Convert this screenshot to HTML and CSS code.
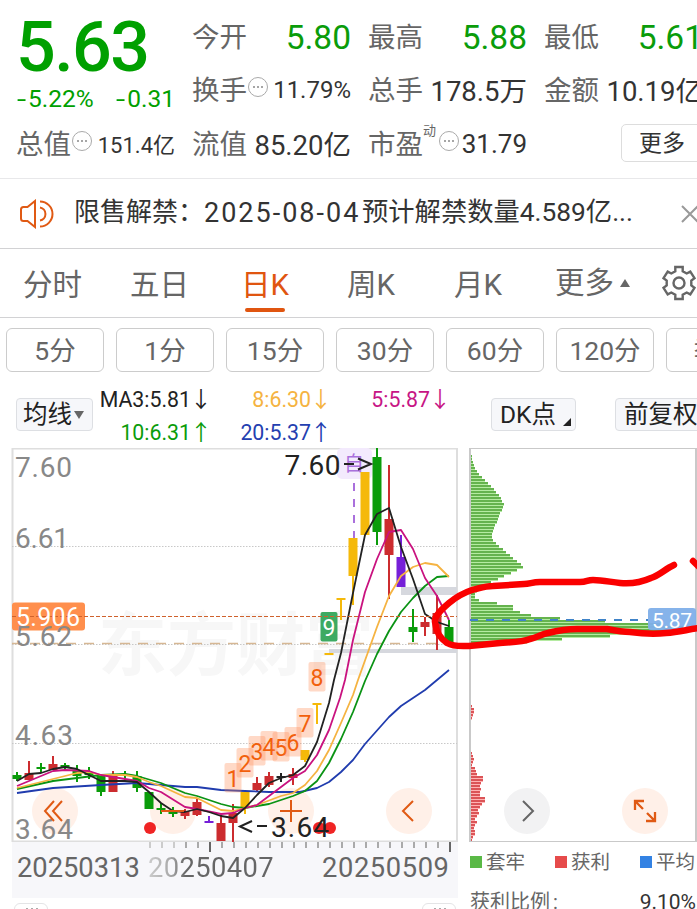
FILE: index.html
```html
<!DOCTYPE html>
<html lang="zh-CN">
<head>
  <meta charset="UTF-8">
  <meta name="viewport" content="width=device-width, initial-scale=1.0">
  <title>日K</title>
  <link rel="stylesheet" href="styles.css">
</head>
<body>
  <header class="quote">
    <div class="price">
      <div class="price-now">5.63</div>
      <div class="price-change"><span><i class="minus">-</i>5.22%</span><span><i class="minus">-</i>0.31</span></div>
    </div>
    <div class="stat"><span class="label">今开</span><span class="value open">5.80</span></div>
    <div class="stat"><span class="label">最高</span><span class="value open">5.88</span></div>
    <div class="stat"><span class="label">最低</span><span class="value open">5.61</span></div>
    <div class="stat"><span class="label">换手<i class="dots"></i></span><span class="value small">11.79%</span></div>
    <div class="stat"><span class="label">总手</span><span class="value">178.5万</span></div>
    <div class="stat"><span class="label">金额</span><span class="value">10.19亿</span></div>
    <div class="stat"><span class="label">总值<i class="dots"></i></span><span class="value tiny">151.4亿</span></div>
    <div class="stat"><span class="label">流值</span><span class="value">85.20亿</span></div>
    <div class="stat"><span class="label">市盈<sup>动</sup><i class="dots"></i></span><span class="value mid">31.79</span></div>
    <button class="more">更多</button>
  </header>

  <section class="notice">
    <svg class="speaker" width="36" height="30" viewBox="0 0 36 30">
      <path d="M16 2v26L8.500 22H4.500Q2 22 2 19.500V10.500Q2 8 4.500 8H8.500ZM21 8.500a6.600 6.600 0 0 1 0 13M21 2.500a12.500 12.500 0 0 1 0 25"/>
    </svg>
    <span class="notice-title">限售解禁：</span>
    <span class="notice-date">2025-08-04</span><span class="notice-text">预计解禁数量4.589亿...</span>
    <svg class="close" width="20" height="20" viewBox="0 0 20 20"><path d="M2 2L18 18M18 2L2 18"/></svg>
  </section>

  <nav class="tabs">
    <a>分时</a>
    <a>五日</a>
    <a class="active">日K</a>
    <a>周K</a>
    <a>月K</a>
    <a class="tab-more">更多<i class="up"></i></a>
    <svg class="gear" width="36" height="36" viewBox="0 0 36 36">
      <path d="M14.300 2h7.400v4.200l4 2.300 3.600-1.900 4.200 6.600-3.200 2.400v4.800l3.200 2.400-4.200 6.600-3.600-1.900-4 2.300V34h-7.400v-4.200l-4-2.300-3.600 1.900-4.200-6.600 3.200-2.400v-4.800l-3.200-2.400 4.200-6.600 3.600 1.900 4-2.300z"/>
      <circle cx="18" cy="18" r="5.500"/>
    </svg>
  </nav>

  <div class="periods">
    <button>5分</button>
    <button>1分</button>
    <button>15分</button>
    <button>30分</button>
    <button>60分</button>
    <button>120分</button>
    <button>季K</button>
  </div>

  <div class="indicators">
    <button class="chip chip-ma">均线<i class="down"></i></button>
    <div class="ma">
      <span class="ma3">MA3:5.81<b>↓</b></span>
      <span class="ma8">8:6.30<b>↓</b></span>
      <span class="ma5">5:5.87<b>↓</b></span>
      <span class="ma10">10:6.31<b>↑</b></span>
      <span class="ma20">20:5.37<b>↑</b></span>
    </div>
    <button class="chip chip-dk">DK点<i class="corner"></i></button>
    <button class="chip chip-fq">前复权</button>
  </div>

  <main class="charts">
    <div class="kline">
      <svg class="plot" width="458" height="394" viewBox="0 448 458 394">
        <text class="watermark" x="98" y="670" textLength="276">东方财富</text>
        <path class="frame" d="M12.500 842V448M457 448V842M12 448.500H458M12 841.500H458"/>
        <path class="grid" d="M12 546.500H457M12 644.500H457M12 743.500H457"/>
        <path class="cost" d="M12 643.500H457"/>
        <rect class="zone" x="401" y="587" width="56" height="8"/>
        <rect class="zone" x="329" y="649" width="128" height="4"/>
        <g class="touch">
          <circle cx="55" cy="811" r="23"/>
          <circle cx="173" cy="811" r="23"/>
          <circle cx="291" cy="811" r="23"/>
          <circle cx="409" cy="811" r="23"/>
        </g>
        <rect class="self-box" x="337" y="448" width="35" height="31" rx="5"/>
        <text class="self" x="344" y="471">自</text>
        <path class="self-line" d="M354 483V538"/>
        <g id="candles"></g>
        <g class="lines">
          <polyline class="l20" points="17,793 53,788 101,785 137,783 161,785 185,787 197,787 221,790 245,791 269,792 300,792 317,788 329,782 341,772 353,760 365,744 389,717 401,706 425,690 449,670"/>
          <polyline class="l10" points="17,789 53,781 101,775 125,774 137,776 161,783 185,793 197,796 221,804 233,807 245,808 257,806 269,804 293,796 305,791 317,781 329,763 341,739 353,712 365,681 377,654 389,631 401,612 413,598 425,586 437,577 449,576"/>
          <polyline class="l8" points="17,788 53,779 77,773 89,772 101,775 125,775 137,777 149,782 161,786 185,797 197,798 221,810 233,811 245,808 257,805 281,796 293,793 305,785 317,771 329,750 341,723 353,695 358,680 377,627 389,596 401,576 413,567 425,563 437,565 449,577"/>
          <polyline class="l5" points="17,786 53,771 65,770 89,771 101,775 137,781 149,788 161,792 185,807 197,809 221,814 233,813 245,808 257,805 269,796 281,787 293,778 305,771 317,755 329,730 340,698 345,680 353,640 365,592 377,559 389,532 401,530 413,549 425,578 437,596 449,620"/>
          <polyline class="l3" points="17,781 29,774 41,773 53,769 65,767 77,769 89,775 101,781 113,781 125,781 137,782 149,792 161,803 173,811 185,812 197,809 209,812 221,816 233,818 245,808 257,795 269,783 281,778 293,775 305,766 317,742 329,703 334,680 341,653 353,593 365,535 377,514 389,508 401,547 413,579 425,614 437,622 449,626"/>
        </g>
        <g id="counts"></g>
        <rect class="last-box" x="12" y="602.500" width="73" height="28" rx="3"/>
        <path class="last-line" d="M12 616.500H457"/>
        <g class="axis">
          <text x="15" y="476.500" textLength="57">7.60</text>
          <text x="15" y="547.500" textLength="54">6.61</text>
          <text x="15" y="646" textLength="57">5.62</text>
          <text x="15" y="744.500" textLength="58">4.63</text>
          <text x="15" y="838.500" textLength="58">3.64</text>
        </g>
        <text class="last" x="16" y="626" textLength="64">5.906</text>
        <g class="marks">
          <text x="284.500" y="474.500" textLength="56">7.60</text>
          <path d="M344 464H354M358 458.500L371 464L358 469.500"/>
          <circle cx="150" cy="828" r="6"/>
          <circle cx="319" cy="828" r="6"/>
          <circle cx="330" cy="828" r="6"/>
          <text x="271" y="836.500" textLength="58">3.64</text>
          <path d="M252 821L240 826.500L252 832M257 826H267"/>
        </g>
        <path class="touch-icon" d="M54 801L45 811L54 821M62 801L53 811L62 821M161 811H184M280 811H302M291 800V822M413 801L403 811L413 821"/>
      </svg>
      <div class="dates">
        <svg class="ticks" width="446" height="12" viewBox="12 842 446 12"><g id="ticks"></g></svg>
        <span>20250313</span>
        <span class="fade">20250407</span>
        <span>20250509</span>
      </div>
      <div class="slider"><i></i><i></i></div>
    </div>

    <div class="chips">
      <svg class="plot" width="239" height="394" viewBox="458 448 239 394">
        <g id="profile"></g>
        <path class="chip-frame" d="M470 448V842M696 448V842"/>
        <path class="chip-edge" d="M469 448.500H697M469 841.500H697"/>
        <path class="avg-line" d="M470 620H648"/>
        <rect class="avg-box" x="648" y="608" width="48" height="22" rx="3"/>
        <text class="avg" x="652" y="628" textLength="40">5.87</text>
        <circle class="gray-touch" cx="527" cy="811" r="23"/>
        <circle class="orange-touch" cx="645" cy="811" r="23"/>
        <path class="next" d="M523 801L533 811L523 821"/>
        <path class="expand" d="M635 810V801H644M635.500 801.500L643 809M655 812V821H646M654.500 820.500L647 813"/>
      </svg>
      <div class="legend">
        <span><i class="green"></i>套牢</span>
        <span><i class="red"></i>获利</span>
        <span><i class="blue"></i>平均</span>
      </div>
      <div class="ratio"><span>获利比例<i>:</i></span><b>9.10%</b></div>
    </div>

    <svg class="pen" width="697" height="110" viewBox="0 550 697 110">
      <path d="M674 565C665 569 660 575 651 578C642 582 630 584 620 583C610 582 603 580 593 580C587 580 587 582 580 582H540C532 582 530 584 524 584L493 586C484 586 478 589 472 590C463 593 455 598 449 603C442 609 434 616 435 622C436 632 441 639 447 643C454 647 461 646 469 646L500 643C515 642 523 642 530 639C538 637 542 634 548 633C560 630 568 629 577 629H607C617 631 622 632 630 632C645 634 657 634 666 633C680 632 689 629 700 628M693 561L700 568"/>
    </svg>
  </main>

  <script>
    const colors = { r: "#cc2c2f", g: "#0a9c0a", y: "#f5b90a", p: "#7620d8", k: "#222" };

    // [x, high, top, bottom, low, color]
    const candles = [
      [17, 772, 775, 779, 781, "g"], [29, 761, 773, 780, 780, "r"], [41, 763, 767, 769, 772, "g"],
      [53, 756, 764, 770, 770, "r"], [65, 763, 765, 767, 770, "g"], [77, 765, 770, 776, 782, "g"],
      [89, 767, 773, 775, 779, "g"], [101, 775, 776, 792, 796, "g"], [113, 771, 776, 792, 792, "r"],
      [125, 771, 774, 776, 780, "g"], [137, 771, 776, 788, 792, "g"], [149, 792, 792, 809, 809, "g"],
      [161, 803, 808, 810, 814, "g"], [173, 807, 811, 814, 817, "g"], [185, 809, 811, 816, 819, "r"],
      [197, 799, 802, 815, 816, "r"], [209, 816, 821, 823, 823, "p"], [221, 815, 823, 841, 841, "r"],
      [233, 804, 813, 823, 842, "r"], [245, 792, 792, 807, 814, "y"], [257, 777, 783, 790, 791, "r"],
      [269, 772, 776, 785, 787, "r"], [281, 773, 776, 778, 782, "k"], [293, 768, 774, 778, 785, "r"],
      [305, 750, 750, 760, 762, "y"], [317, 703, 703, 705, 724, "y"], [329, 653, 653, 655, 655, "y"],
      [341, 598, 598, 600, 620, "y"], [353, 538, 538, 576, 605, "y"], [365, 472, 472, 535, 535, "y"],
      [377, 448, 457, 532, 545, "g"], [389, 465, 519, 555, 599, "r"], [401, 535, 557, 587, 587, "p"],
      [413, 609, 627, 632, 642, "g"], [425, 617, 622, 627, 636, "r"], [437, 595, 613, 634, 650, "r"],
      [449, 620, 627, 642, 645, "g"]
    ];
    document.getElementById("candles").innerHTML = candles.map(([x, high, top, bottom, low, c]) =>
      `<rect x="${x - 1}" y="${high}" width="2" height="${low - high}" fill="${colors[c]}"/>` +
      `<rect x="${x - 4.5}" y="${top}" width="9" height="${bottom - top}" fill="${colors[c]}"/>`
    ).join("");

    // 九转 1-9
    const counts = [[233, 763], [245, 748], [257, 736], [269, 731], [281, 732], [293, 727], [305, 708], [317, 662], [329, 612]];
    document.getElementById("counts").innerHTML = counts.map(([x, y], i) =>
      `<g class="${i === 8 ? "nine" : "count"}"><rect x="${x - 8.5}" y="${y}" width="17" height="29.5" rx="2"/>` +
      `<text x="${x}" y="${y + 23.5}">${i + 1}</text></g>`
    ).join("");

    let ticks = "";
    for (let x = 150; x <= 450; x += 12) {
      const major = x === 210 || x === 450;
      ticks += `<rect x="${x - 1}" y="842" width="2" height="${major ? 10 : 6}" fill="${major ? "#666" : x < 180 ? "#ccc" : "#aaa"}"/>`;
    }
    document.getElementById("ticks").innerHTML = ticks;

    // 筹码分布, 每 3px 一条
    const locked = [1, 1, 2, 2, 3, 4, 5, 7, 9, 12, 15, 18, 21, 24, 26, 29, 31, 32, 34, 33, 32, 30, 29, 28, 27, 25, 24, 23, 22, 22,
      23, 26, 29, 33, 36, 40, 43, 47, 51, 53, 47, 41, 34, 28, 21, 15, 10, 7, 5, 5, 9, 27, 43, 43, 50, 61, 90, 135, 190, 226, 226, 180, 140, 92, 57];
    const profit = [
      [655, [1]],
      [706, [2, 4, 4, 3, 2, 1]],
      [750, [1, 2, 3, 4, 3, 2, 5, 6, 7, 13, 13, 11, 10, 11, 10, 10, 15, 15, 12, 10, 8, 9, 7, 5, 7, 5, 4, 5, 5, 3, 2]]
    ];
    const bars = (start, list, dark, light) => list.map((w, i) =>
      `<rect x="470" y="${start + i * 3 - 1}" width="${w}" height="3" fill="${light}"/>` +
      `<rect x="470" y="${start + i * 3 - 1}" width="${w}" height="2" fill="${dark}"/>`
    ).join("");
    document.getElementById("profile").innerHTML =
      bars(450, locked, "#65b34e", "#b5eba2") +
      profit.map(([y, list]) => bars(y, list, "#db5457", "#ffb3b3")).join("");
  </script>
</body>
</html>
```
FILE: styles.css
```css
* {
  box-sizing: border-box;
}
html {
  overflow: hidden;
}
body {
  width: 697px;
  height: 909px;
  margin: 0;
  overflow: hidden;
  background: #fff;
  color: #333;
  font-family: Roboto, "Noto Sans CJK SC", sans-serif;
}
button {
  margin: 0;
  padding: 0;
  font-family: inherit;
  white-space: nowrap;
}
svg {
  display: block;
  flex: none;
}
i, b {
  font-style: normal;
  font-weight: 400;
}

/* quote */
.quote {
  display: grid;
  grid-template-columns: repeat(4, 159px);
  grid-template-rows: repeat(3, 53.5px);
  column-gap: 17px;
  height: 179px;
  padding: 9px 0 0 16px;
  border-bottom: 1px solid #e8e8ea;
}
.price {
  grid-row: span 2;
  color: #00a000;
}
.price-now {
  height: 73px;
  padding-top: 2px;
  font-size: 70px;
  font-weight: 500;
  line-height: 72px;
  letter-spacing: -1.6px;
}
.price-change {
  display: flex;
  justify-content: space-between;
  padding-left: 1px;
  line-height: 34px;
  font-size: 24.5px;
}
.minus {
  display: inline-block;
  width: 11px;
  transform: scaleX(1.35);
  transform-origin: 0 50%;
}
.stat {
  display: flex;
  align-items: center;
  justify-content: space-between;
  white-space: nowrap;
}
.label {
  display: flex;
  align-items: center;
  margin-top: -2px;
  color: #666;
  font-size: 27.5px;
}
.label sup {
  align-self: flex-start;
  margin-top: 1px;
  font-size: 13px;
  line-height: 16px;
}
.value {
  font-size: 27.5px;
}
.open {
  padding-top: 3px;
  color: #0a9c0a;
  font-size: 33.500px;
}
.small {
  padding-top: 1px;
  font-size: 24px;
}
.tiny {
  font-size: 22px;
}
.mid {
  padding-top: 3px;
  font-size: 26px;
}
.dots {
  display: grid;
  place-items: center;
  width: 20px;
  height: 20px;
  margin-left: 1px;
  margin-top: -2px;
  border: 1.5px solid #aaa;
  border-radius: 50%;
}
.label sup + .dots {
  margin-left: 3px;
}
.dots::before {
  content: "";
  width: 2px;
  height: 2px;
  border-radius: 1px;
  background: #888;
  box-shadow: -4px 0 #888, 4px 0 #888;
}
.more {
  width: 100px;
  height: 38px;
  margin: 8px 0 0 77px;
  padding-right: 18px;
  border: 1px solid #ddd;
  border-radius: 5px;
  background: #fff;
  color: #333;
  font-size: 23px;
  line-height: 33px;
}

/* notice */
.notice {
  display: flex;
  align-items: center;
  height: 70px;
  padding-left: 19px;
  border-bottom: 1px solid #d2d2d4;
  font-size: 26px;
  line-height: 66px;
  white-space: nowrap;
}
.notice span {
  flex: none;
  height: 70px;
}
.speaker {
  margin-right: 19px;
  fill: none;
  stroke: #e05a14;
  stroke-width: 2;
}
.notice-title {
  width: 130px;
}
.notice-date {
  width: 158px;
  padding-top: 1px;
  font-size: 27px;
  letter-spacing: 2px;
}
.notice-text {
  width: 318px;
  font-size: 26.3px;
}
.close {
  fill: none;
  stroke: #999;
  stroke-width: 2;
}

/* tabs */
.tabs {
  display: flex;
  align-items: center;
  height: 69px;
  padding-left: 23px;
  border-bottom: 1px solid #d2d2d4;
  color: #666;
  font-size: 29.5px;
  line-height: 73px;
}
.tabs a {
  display: flex;
  flex: none;
  flex-direction: column;
  width: 108px;
  height: 69px;
}
.tabs a:first-child {
  width: 107px;
}
.tabs a:nth-child(3) {
  width: 112px;
  padding-left: 3px;
}
.tabs .active {
  color: #e05510;
}
.active::after {
  content: "";
  width: 40px;
  height: 4px;
  margin-top: -14px;
  margin-left: 4px;
  border-radius: 2px;
  background: #e05510;
}
.tabs a:nth-child(4) {
  width: 107px;
  margin-left: -3px;
}
.tabs a:nth-child(5) {
  width: 101px;
}
.tabs .tab-more {
  flex-direction: row;
  align-items: center;
}
.up {
  margin-left: 6px;
  border: 5px solid transparent;
  border-top: 0;
  border-bottom: 8px solid #666;
}
.gear {
  margin-left: -2px;
  fill: none;
  stroke: #666;
  stroke-width: 2.4;
}

.periods {
  display: flex;
  gap: 12px;
  height: 66px;
  padding: 10px 0 0 6px;
}
.periods button {
  flex: none;
  width: 98px;
  height: 44px;
  padding-top: 2px;
  border: 1px solid #ccc;
  border-radius: 6px;
  background: #fff;
  color: #666;
  font-size: 26.5px;
  line-height: 40px;
}

/* indicators */
.indicators {
  display: flex;
  height: 64px;
  padding-left: 16px;
}
.chip {
  display: flex;
  flex: none;
  align-items: center;
  height: 33px;
  margin-top: 14px;
  padding: 0 6px;
  border: 1px solid #dddfe3;
  border-radius: 4px;
  background: #f6f7fa;
  color: #222;
  font-size: 24.5px;
  line-height: 30px;
}
.chip-ma {
  width: 77px;
}
.chip-dk {
  width: 85px;
  padding-left: 8px;
}
.chip-fq {
  width: 95px;
  margin-left: 39px;
  padding-left: 8px;
}
.down {
  margin-left: 2px;
  border: 5px solid transparent;
  border-bottom: 0;
  border-top: 8px solid #666;
}
.corner {
  align-self: flex-end;
  margin-left: 7px;
  margin-bottom: 4px;
  border-left: 8px solid transparent;
  border-bottom: 8px solid #222;
}
.ma {
  display: grid;
  flex: none;
  grid-template-columns: 115px 120px 119px;
  grid-template-rows: 33px 33px;
  width: 398px;
  font-size: 21.3px;
  line-height: 32px;
  text-align: right;
  white-space: nowrap;
}
.ma b {
  display: inline-block;
  width: 14px;
  margin-left: 3px;
  font-family: "Noto Sans CJK SC", sans-serif;
  font-size: 22px;
  line-height: 20px;
  text-indent: -4px;
}
.ma3 {
  color: #222;
}
.ma8 {
  color: #f5b341;
}
.ma5 {
  color: #c71585;
}
.ma10 {
  color: #0a9c0a;
}
.ma20 {
  color: #2440b0;
}

/* charts */
.charts {
  display: flex;
  position: relative;
}
.kline {
  width: 458px;
}
.watermark {
  fill: #f7f7f7;
  font-size: 69px;
  font-weight: 700;
}
.frame {
  fill: none;
  stroke: #dedede;
  stroke-width: 2;
}
.grid {
  stroke: #c8c8c8;
  stroke-dasharray: 1.5 1.5;
}
.axis {
  fill: #888;
  font-size: 28px;
}
.cost {
  stroke: #d6b793;
  stroke-width: 1.5;
  stroke-dasharray: 10 8;
}
.zone {
  fill: #d6d8de;
}
.touch, .orange-touch {
  fill: #fff0e8;
}
.touch-icon, .next, .expand {
  fill: none;
  stroke: #e05a14;
  stroke-width: 2;
}
.self-box {
  fill: #f3eafd;
}
.self {
  fill: #aa70dc;
  font-size: 20px;
}
.self-line {
  stroke: #aa70dc;
  stroke-width: 2;
  stroke-dasharray: 8 8;
}
.lines {
  fill: none;
  stroke-width: 1.8;
  stroke-linejoin: round;
}
.l3 {
  stroke: #222;
}
.l5 {
  stroke: #c9127f;
}
.l8 {
  stroke: #f5b341;
}
.l10 {
  stroke: #0a9314;
}
.l20 {
  stroke: #203cae;
}
.count rect {
  fill: #ff8850;
  opacity: .32;
}
.nine rect {
  fill: #3daa62;
}
.count text, .nine text {
  fill: #f2600c;
  font-size: 23px;
  text-anchor: middle;
}
.nine text {
  fill: #fff;
}
.last-line {
  stroke: #cf622d;
  stroke-dasharray: 4 2;
}
.last-box {
  fill: #ff8f4d;
}
.last {
  fill: #fff;
  font-size: 25px;
}
.marks text {
  fill: #222;
  font-size: 28px;
}
.marks path {
  fill: none;
  stroke: #222;
  stroke-width: 2;
}
.marks circle {
  fill: #f02424;
}
.dates {
  display: grid;
  grid-template-columns: 131px 174px 1fr;
  grid-template-rows: 12px 28px;
  width: 446px;
  height: 56px;
  margin-left: 12px;
  padding-left: 5px;
  background: #f7f7fa;
  color: #666;
  font-size: 27.3px;
  line-height: 29px;
}
.dates span:last-child {
  letter-spacing: .6px;
}
.ticks {
  grid-column: span 3;
  margin-left: -5px;
}
.fade {
  color: transparent;
  background: linear-gradient(90deg, #ccc, #aaa 22px, #666 38px);
  background-clip: text;
  -webkit-background-clip: text;
  letter-spacing: .4px;
}
.slider {
  display: flex;
  justify-content: space-between;
  height: 11px;
  padding: 5px 2px 0 14px;
}
.slider i {
  width: 34px;
  height: 12px;
  border: 1px solid #e4e4e6;
  border-radius: 8px;
  background: radial-gradient(circle at 12px 5px, #aaa 1px, transparent 1.5px), radial-gradient(circle at 17px 5px, #aaa 1px, transparent 1.5px), radial-gradient(circle at 22px 5px, #aaa 1px, transparent 1.5px), #fff;
}

.chips {
  width: 239px;
}
.chip-frame {
  stroke: #c9c9c9;
  stroke-width: 2;
}
.chip-edge {
  stroke: #c9c9c9;
}
.avg-line {
  stroke: #3f83c8;
  stroke-width: 2;
  stroke-dasharray: 8 8;
}
.avg-box {
  fill: #80afe9;
  opacity: .95;
}
.avg {
  fill: #fff;
  font-size: 21px;
}
.gray-touch {
  fill: #f2f2f3;
}
.next {
  stroke: #666;
}
.expand {
  stroke-width: 2.3;
}
.legend {
  display: flex;
  height: 40px;
  padding-left: 12px;
  color: #666;
  font-size: 19.5px;
  line-height: 39px;
}
.legend span {
  display: flex;
  flex: none;
  align-items: center;
  width: 85px;
}
.legend span i {
  width: 12px;
  height: 12px;
  margin-right: 4px;
}
.green {
  background: #5ab946;
}
.red {
  background: #e64b4b;
}
.blue {
  background: #3382e3;
}
.ratio {
  display: flex;
  justify-content: space-between;
  height: 27px;
  padding: 5px 1px 0 12px;
  color: #666;
  font-size: 20px;
  line-height: 30px;
}
.ratio i {
  margin-left: 3px;
}
.ratio b {
  color: #333;
  font-size: 21px;
}
.pen {
  position: absolute;
  top: 102px;
  left: 0;
  fill: none;
  stroke: #fa0000;
  stroke-width: 6.5;
  stroke-linecap: round;
  stroke-linejoin: round;
  pointer-events: none;
}
```
